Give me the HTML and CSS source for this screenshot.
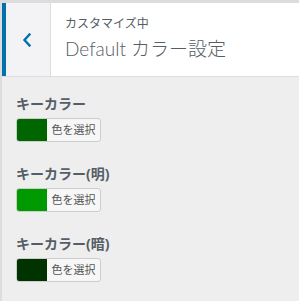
FILE: index.html
```html
<!DOCTYPE html>
<html lang="ja">
<head>
    <meta charset="UTF-8">
    <title>カスタマイズ中 - Default カラー設定</title>
    <link rel="stylesheet" href="styles.css">
</head>
<body>

    <div class="customize-panel">
        <div class="panel-header">
            <button class="panel-back" type="button" aria-label="戻る">
                <svg class="back-icon" viewBox="0 0 10 14" xmlns="http://www.w3.org/2000/svg">
                    <path d="M7.5 1.5 L2.5 7 L7.5 12.5" fill="none" stroke-width="2.4" stroke-linecap="square"/>
                </svg>
            </button>
            <div class="panel-title">
                <span class="panel-action">カスタマイズ中</span>
                <h2 class="panel-name">Default カラー設定</h2>
            </div>
        </div>

        <ul class="control-list">
            <li class="color-control">
                <span class="control-label">キーカラー</span>
                <button class="color-picker" type="button">
                    <span class="color-swatch" style="background-color: #006600;"></span>
                    <span class="color-text">色を選択</span>
                </button>
            </li>
            <li class="color-control">
                <span class="control-label">キーカラー(明)</span>
                <button class="color-picker" type="button">
                    <span class="color-swatch" style="background-color: #009900;"></span>
                    <span class="color-text">色を選択</span>
                </button>
            </li>
            <li class="color-control">
                <span class="control-label">キーカラー(暗)</span>
                <button class="color-picker" type="button">
                    <span class="color-swatch" style="background-color: #003300;"></span>
                    <span class="color-text">色を選択</span>
                </button>
            </li>
        </ul>
    </div>

</body>
</html>
```

FILE: styles.css
```css
body {
    margin: 0;
    background: #eeeeee;
    font-family: "Noto Sans", "Noto Sans CJK JP", sans-serif;
    color: #555d66;
}
.customize-panel {
    border-top: 3px solid #dcdcde;
    border-left: 2px solid #dddddd;
    height: 100vh;
    box-sizing: border-box;
}
.panel-header {
    display: flex;
    height: 73px;
    background: #ffffff;
    border-bottom: 1px solid #dddddd;
}
.panel-back {
    width: 49px;
    padding: 0 3px 0 0;
    border: none;
    border-left: 4px solid #0073aa;
    border-right: 1px solid #dddddd;
    background: #f3f3f5;
    display: flex;
    align-items: center;
    justify-content: center;
    cursor: pointer;
}
.back-icon {
    width: 10px;
    height: 14px;
    stroke: #0073aa;
}
.panel-title {
    padding: 12px 0 0 14px;
}
.panel-action {
    display: block;
    font-size: 12px;
    line-height: 18px;
}
.panel-name {
    margin: 2px 0 0;
    font-family: Lato, "Noto Sans CJK JP", sans-serif;
    font-size: 19px;
    font-weight: 300;
    line-height: 28px;
}
.control-list {
    list-style: none;
    margin: 0;
    padding: 17px 14px 0;
    display: grid;
    gap: 22px;
}
.control-label {
    display: block;
    font-size: 14px;
    font-weight: 700;
    line-height: 20px;
    margin-bottom: 4px;
}
.color-picker {
    display: flex;
    align-items: stretch;
    width: 85px;
    height: 24px;
    padding: 0;
    border: 1px solid #cccccc;
    border-radius: 3px;
    background: #f7f7f7;
    overflow: hidden;
    cursor: pointer;
    font-family: inherit;
}
.color-swatch {
    width: 30px;
}
.color-text {
    flex: 1;
    font-size: 11px;
    line-height: 22px;
    color: #555555;
    text-align: center;
}
```
